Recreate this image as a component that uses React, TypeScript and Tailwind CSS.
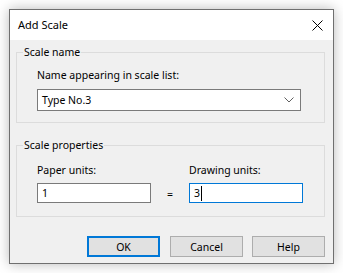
import { useState } from 'react';

const font = { fontFamily: '"Noto Sans", "Liberation Sans", sans-serif' };

function GroupBox({ title, className, children }: { title: string; className?: string; children: React.ReactNode }) {
  return (
    <div className={`relative border border-[#dcdcdc] ${className ?? ''}`}>
      <span className="absolute left-[6px] top-[-9px] bg-[#f0f0f0] px-[1px] leading-[16px]">{title}</span>
      {children}
    </div>
  );
}

export default function App() {
  const [name] = useState('Type No.3');

  return (
    <div className="min-h-screen bg-white pl-[9px] pt-[9px] text-[10.5px] text-black" style={font}>
      <div className="flex h-[255px] w-[325px] flex-col border border-[#6f6f6f] bg-[#f0f0f0] shadow-[0_0_12px_rgba(0,0,0,0.28)]">
        {/* title bar */}
        <div className="flex h-[30px] shrink-0 items-center justify-between bg-white pl-[8px] pr-[10px]">
          <span className="text-[11px] leading-[16px]">Add Scale</span>
          <svg width="11" height="11" viewBox="0 0 11 11">
            <path d="M0.5 0.5 L10.5 10.5 M10.5 0.5 L0.5 10.5" stroke="#000" strokeWidth="1" />
          </svg>
        </div>

        <div className="pl-[6px] pr-[8px] pt-[12px]">
          <GroupBox title="Scale name" className="h-[71px]">
            <div className="pl-[20px] pt-[14px]">
              <div className="leading-[16px]">Name appearing in scale list:</div>
              <div className="mt-[6px] flex h-[22px] w-[264px] items-center justify-between border border-[#7a7a7a] bg-white pl-[4px] pr-[6px]">
                <span className="leading-[16px]">{name}</span>
                <svg width="10" height="6" viewBox="0 0 10 6">
                  <path d="M0.5 0.5 L5 5 L9.5 0.5" fill="none" stroke="#606060" strokeWidth="1" />
                </svg>
              </div>
            </div>
          </GroupBox>

          <GroupBox title="Scale properties" className="mt-[22px] h-[72px]">
            <div className="flex pl-[20px] pt-[16px]">
              <div className="w-[114px]">
                <div className="leading-[16px]">Paper units:</div>
                <div className="mt-[5px] flex h-[20px] items-center border border-[#7a7a7a] bg-white pl-[4px]">
                  <span className="leading-[16px]">1</span>
                </div>
              </div>
              <div className="flex w-[38px] items-end justify-center pb-[1px]">
                <span className="leading-[16px]">=</span>
              </div>
              <div className="w-[114px]">
                <div className="leading-[16px]">Drawing units:</div>
                <div className="mt-[5px] flex h-[20px] items-center border border-[#0078d7] bg-white pl-[4px]">
                  <span className="leading-[16px]">3</span>
                  <span className="ml-[1px] h-[15px] w-[1px] bg-black" />
                </div>
              </div>
            </div>
          </GroupBox>

          <div className="mt-[19px] flex justify-end">
            <button className="h-[21px] w-[73px] border-2 border-[#0078d7] bg-[#e1e1e1] leading-[16px]">OK</button>
            <button className="ml-[10px] h-[21px] w-[73px] border border-[#adadad] bg-[#e1e1e1] leading-[16px]">Cancel</button>
            <button className="ml-[9px] h-[21px] w-[73px] border border-[#adadad] bg-[#e1e1e1] leading-[16px]">Help</button>
          </div>
        </div>
      </div>
    </div>
  );
}
